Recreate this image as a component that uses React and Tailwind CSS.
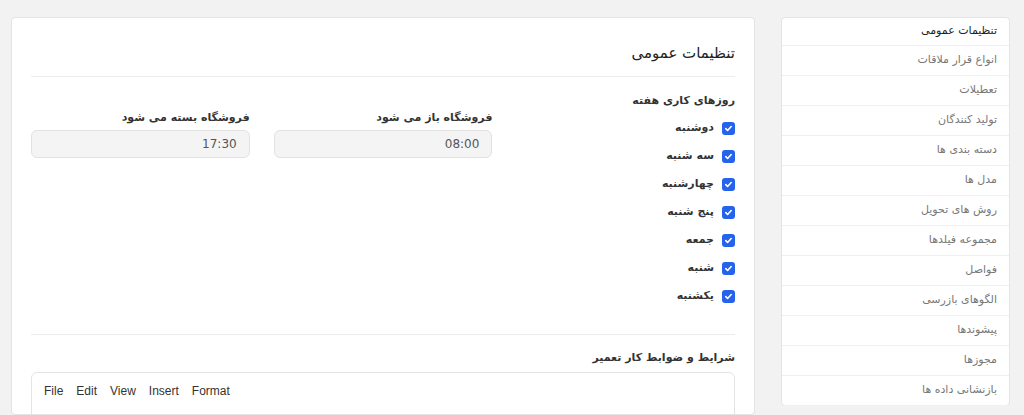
const menu = ['تنظیمات عمومی','انواع قرار ملاقات','تعطیلات','تولید کنندگان','دسته بندی ها','مدل ها','روش های تحویل','مجموعه فیلدها','فواصل','الگوهای بازرسی','پیشوندها','مجوزها','بازنشانی داده ها'];
const days = ['دوشنبه','سه شنبه','چهارشنبه','پنج شنبه','جمعه','شنبه','یکشنبه'];

function Check() {
  return (
    <span className="w-[13px] h-[13px] rounded-[3px] bg-[#2563eb] flex items-center justify-center">
      <svg width="9" height="9" viewBox="0 0 10 10"><path d="M2 5.2l2 2 4-4.4" fill="none" stroke="white" strokeWidth="1.8" strokeLinecap="round" strokeLinejoin="round"/></svg>
    </span>
  );
}

function TimeField({ label, value }) {
  return (
    <div>
      <div className="text-[11px] font-bold text-[#333] h-[20px]">{label}</div>
      <div className="h-[28px] rounded-md border border-[#e2e2e2] bg-[#f4f4f4] flex items-center px-3 text-[12px] text-[#555]">{value}</div>
    </div>
  );
}

export default function App() {
  return (
    <div dir="rtl" className="w-[1024px] h-[415px] overflow-hidden bg-[#f2f2f2] flex gap-[26px] pr-[14px] pl-[11px] pt-[17px]" style={{ fontFamily: '"DejaVu Sans", sans-serif' }}>
      <div className="w-[229px] h-[389px] shrink-0 bg-white border border-[#e4e4e4] rounded">
        {menu.map((m, i) => (
          <div key={m} className={`flex items-center px-[12px] text-[11px] border-b border-[#f0f0f0] ${i === 0 ? 'text-[#222] h-[28px]' : 'text-[#777] h-[30px]'}`}>{m}</div>
        ))}
      </div>
      <div className="flex-1 bg-white border border-[#e4e4e4] rounded px-[19px]">
        <div className="h-[59px] flex items-end pb-[12px] text-[15px] text-[#222] border-b border-[#ececec]">تنظیمات عمومی</div>
        <div className="grid grid-cols-3 gap-6 pt-[16px] pb-[24px] border-b border-[#ececec]">
          <div>
            <div className="text-[11px] font-bold text-[#333] h-[21px]">روزهای کاری هفته</div>
            {days.map(d => (
              <div key={d} className="h-[28px] flex items-center gap-[8px] text-[11px] font-bold text-[#333]"><Check />{d}</div>
            ))}
          </div>
          <div className="pt-[17px]"><TimeField label="فروشگاه باز می شود" value="08:00" /></div>
          <div className="pt-[17px]"><TimeField label="فروشگاه بسته می شود" value="17:30" /></div>
        </div>
        <div className="pt-[15px] text-[11px] font-bold text-[#333]">شرایط و ضوابط کار تعمیر</div>
        <div className="mt-[5px] h-[60px] border border-[#e4e4e4] rounded-md">
          <div dir="ltr" className="flex gap-[13px] px-[12px] pt-[9px] text-[12px] text-[#333]" style={{ fontFamily: '"Liberation Sans", sans-serif' }}>
            <span>File</span><span>Edit</span><span>View</span><span>Insert</span><span>Format</span>
          </div>
        </div>
      </div>
    </div>
  );
}
